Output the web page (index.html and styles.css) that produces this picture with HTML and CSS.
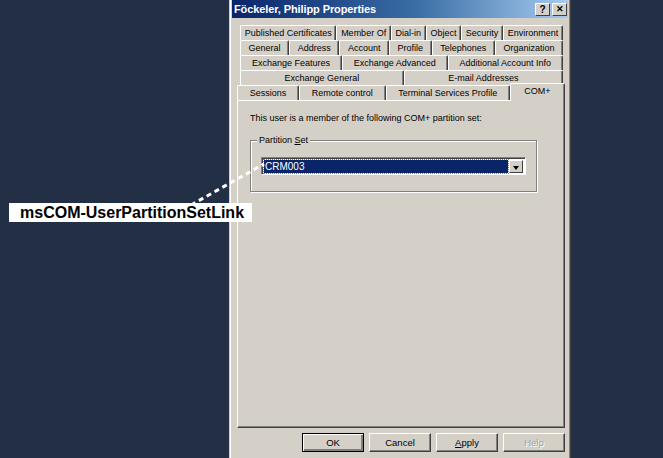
FILE: index.html
```html
<!DOCTYPE html>
<html lang="en">
<head>
    <meta charset="UTF-8">
    <link rel="stylesheet" href="styles.css">
    <title>Föckeler, Philipp Properties</title>
</head>
<body>
    <div class="desk">
        <div class="dialog">
            <div class="titlebar">
                <span class="title">Föckeler, Philipp Properties</span>
                <span class="capbtn">?</span>
                <span class="capbtn close">&#x2715;</span>
            </div>

            <div class="tabs">
                <div class="row">
                    <div class="tab">Published Certificates</div>
                    <div class="tab">Member Of</div>
                    <div class="tab">Dial-in</div>
                    <div class="tab">Object</div>
                    <div class="tab">Security</div>
                    <div class="tab">Environment</div>
                </div>
                <div class="row">
                    <div class="tab">General</div>
                    <div class="tab">Address</div>
                    <div class="tab">Account</div>
                    <div class="tab">Profile</div>
                    <div class="tab">Telephones</div>
                    <div class="tab">Organization</div>
                </div>
                <div class="row">
                    <div class="tab">Exchange Features</div>
                    <div class="tab">Exchange Advanced</div>
                    <div class="tab">Additional Account Info</div>
                </div>
                <div class="row">
                    <div class="tab">Exchange General</div>
                    <div class="tab">E-mail Addresses</div>
                </div>
                <div class="row front">
                    <div class="tab">Sessions</div>
                    <div class="tab">Remote control</div>
                    <div class="tab">Terminal Services Profile</div>
                    <div class="tab selected">COM+</div>
                </div>
            </div>

            <div class="panel">
                <p class="intro">This user is a member of the following COM+ partition set:</p>
                <div class="group">
                    <span class="legend">Partition <u>S</u>et</span>
                    <div class="combo">
                        <div class="field"><span class="value">CRM003</span></div>
                        <div class="arrow"></div>
                    </div>
                </div>
            </div>

            <div class="buttons">
                <button class="default">OK</button>
                <button>Cancel</button>
                <button><u>A</u>pply</button>
                <button class="disabled">Help</button>
            </div>
        </div>
    </div>

    <!-- callout pointing at the combo box -->
    <svg class="leader" width="663" height="458">
        <line x1="191" y1="205" x2="264" y2="164" stroke="#fff" stroke-width="3" stroke-dasharray="5 4"/>
    </svg>
    <div class="callout">msCOM-UserPartitionSetLink</div>
</body>
</html>
```

FILE: styles.css
```css
* {
    box-sizing: border-box;
}

body {
    margin: 0;
    background: #222f44;
    font-family: "Liberation Sans", Arial, sans-serif;
    font-size: 9px;
    color: #000;
    overflow: hidden;
}

.desk {
    display: flex;
    height: 458px;
    padding-left: 229px;
}

.dialog {
    width: 342px;
    height: 458px;
    background: #d4d0c8;
    border-left: 1px solid #d4d0c8;
    border-right: 1px solid #404040;
    box-shadow: inset 1px 0 0 #fff, inset -1px 0 0 #808080;
    padding: 0 2px;
    display: flex;
    flex-direction: column;
}

/* caption */
.titlebar {
    height: 18px;
    flex: none;
    display: flex;
    align-items: center;
    padding: 0 1px 0 2px;
    background: linear-gradient(to right, #0a246a, #3a6ea5 55%, #a6caf0);
}

.title {
    flex: 1;
    color: #fff;
    font-weight: bold;
    font-size: 11px;
    letter-spacing: -0.1px;
}

.capbtn {
    width: 15px;
    height: 13px;
    margin-left: 2px;
    background: #d4d0c8;
    border: 1px solid;
    border-color: #fff #404040 #404040 #fff;
    font-size: 10px;
    font-weight: bold;
    line-height: 11px;
    text-align: center;
}

.capbtn.close {
    font-size: 9px;
}

/* tab strip */
.tabs {
    flex: none;
    margin-top: 7px;
    padding: 0 5px 0 8px;
}

.row {
    display: flex;
    height: 15px;
}

.row.front {
    margin-left: -3px;
    margin-right: -2px;
    align-items: flex-end;
    position: relative;
    z-index: 1;
}

.tab {
    flex: 1 1 auto;
    height: 15px;
    line-height: 14px;
    text-align: center;
    white-space: nowrap;
    padding: 0 3px;
    border-top: 1px solid #fff;
    border-left: 1px solid #fff;
    border-right: 1px solid #404040;
    border-radius: 2px 2px 0 0;
    box-shadow: inset -1px 0 0 #808080;
}

.tab.selected {
    flex: 0 0 55px;
    height: 18px;
    line-height: 14px;
    margin: 0 0 -1px;
    background: #d4d0c8;
}

/* page body */
.panel {
    flex: none;
    height: 328px;
    margin: 0 3px 0 5px;
    border: 1px solid;
    border-color: #fff #404040 #404040 #fff;
    box-shadow: inset -1px -1px 0 #808080;
    padding: 0 27px 0 12px;
}

.intro {
    margin: 12px 0 0;
    line-height: 11px;
}

.group {
    margin-top: 16px;
    height: 52px;
    position: relative;
    border: 1px solid #808080;
    box-shadow: inset 1px 1px 0 #fff, 1px 1px 0 #fff;
    padding: 16px 10px 0;
}

.legend {
    position: absolute;
    top: -6px;
    left: 6px;
    padding: 0 2px;
    background: #d4d0c8;
    line-height: 11px;
}

.combo {
    display: flex;
    height: 18px;
    border: 1px solid;
    border-color: #808080 #fff #fff #808080;
    box-shadow: inset 1px 1px 0 #404040;
    background: #fff;
    padding: 2px 2px 1px 2px;
}

.field {
    flex: 1;
    background: #0a246a;
    margin-right: 1px;
    outline: 1px dotted #808080;
}

.value {
    color: #fff;
    line-height: 13px;
    font-size: 10px;
    padding-left: 1px;
}

.arrow {
    width: 14px;
    background: #d4d0c8;
    border: 1px solid;
    border-color: #fff #404040 #404040 #fff;
    position: relative;
}

.arrow::after {
    content: "";
    position: absolute;
    left: 3px;
    top: 5px;
    border-left: 3.5px solid transparent;
    border-right: 3.5px solid transparent;
    border-top: 4px solid #000;
}

/* command buttons */
.buttons {
    flex: none;
    display: flex;
    justify-content: flex-end;
    gap: 5px;
    margin-top: 5px;
    padding-right: 3px;
}

button {
    width: 62px;
    height: 19px;
    background: #d4d0c8;
    border: 1px solid;
    border-color: #fff #404040 #404040 #fff;
    box-shadow: inset -1px -1px 0 #808080;
    font-family: inherit;
    font-size: 9.5px;
    padding: 0;
}

button.default {
    border-color: #000;
    box-shadow: inset 1px 1px 0 #fff, inset -2px -2px 0 #808080;
}

button.disabled {
    color: #a0a0a0;
    text-shadow: 1px 1px 0 #fff;
}

/* annotation */
.leader {
    position: absolute;
    left: 0;
    top: 0;
}

.callout {
    position: absolute;
    left: 9px;
    top: 203px;
    width: 243px;
    height: 19px;
    padding-left: 11px;
    background: #fff;
    font-size: 16px;
    font-weight: bold;
    line-height: 19px;
}
```
